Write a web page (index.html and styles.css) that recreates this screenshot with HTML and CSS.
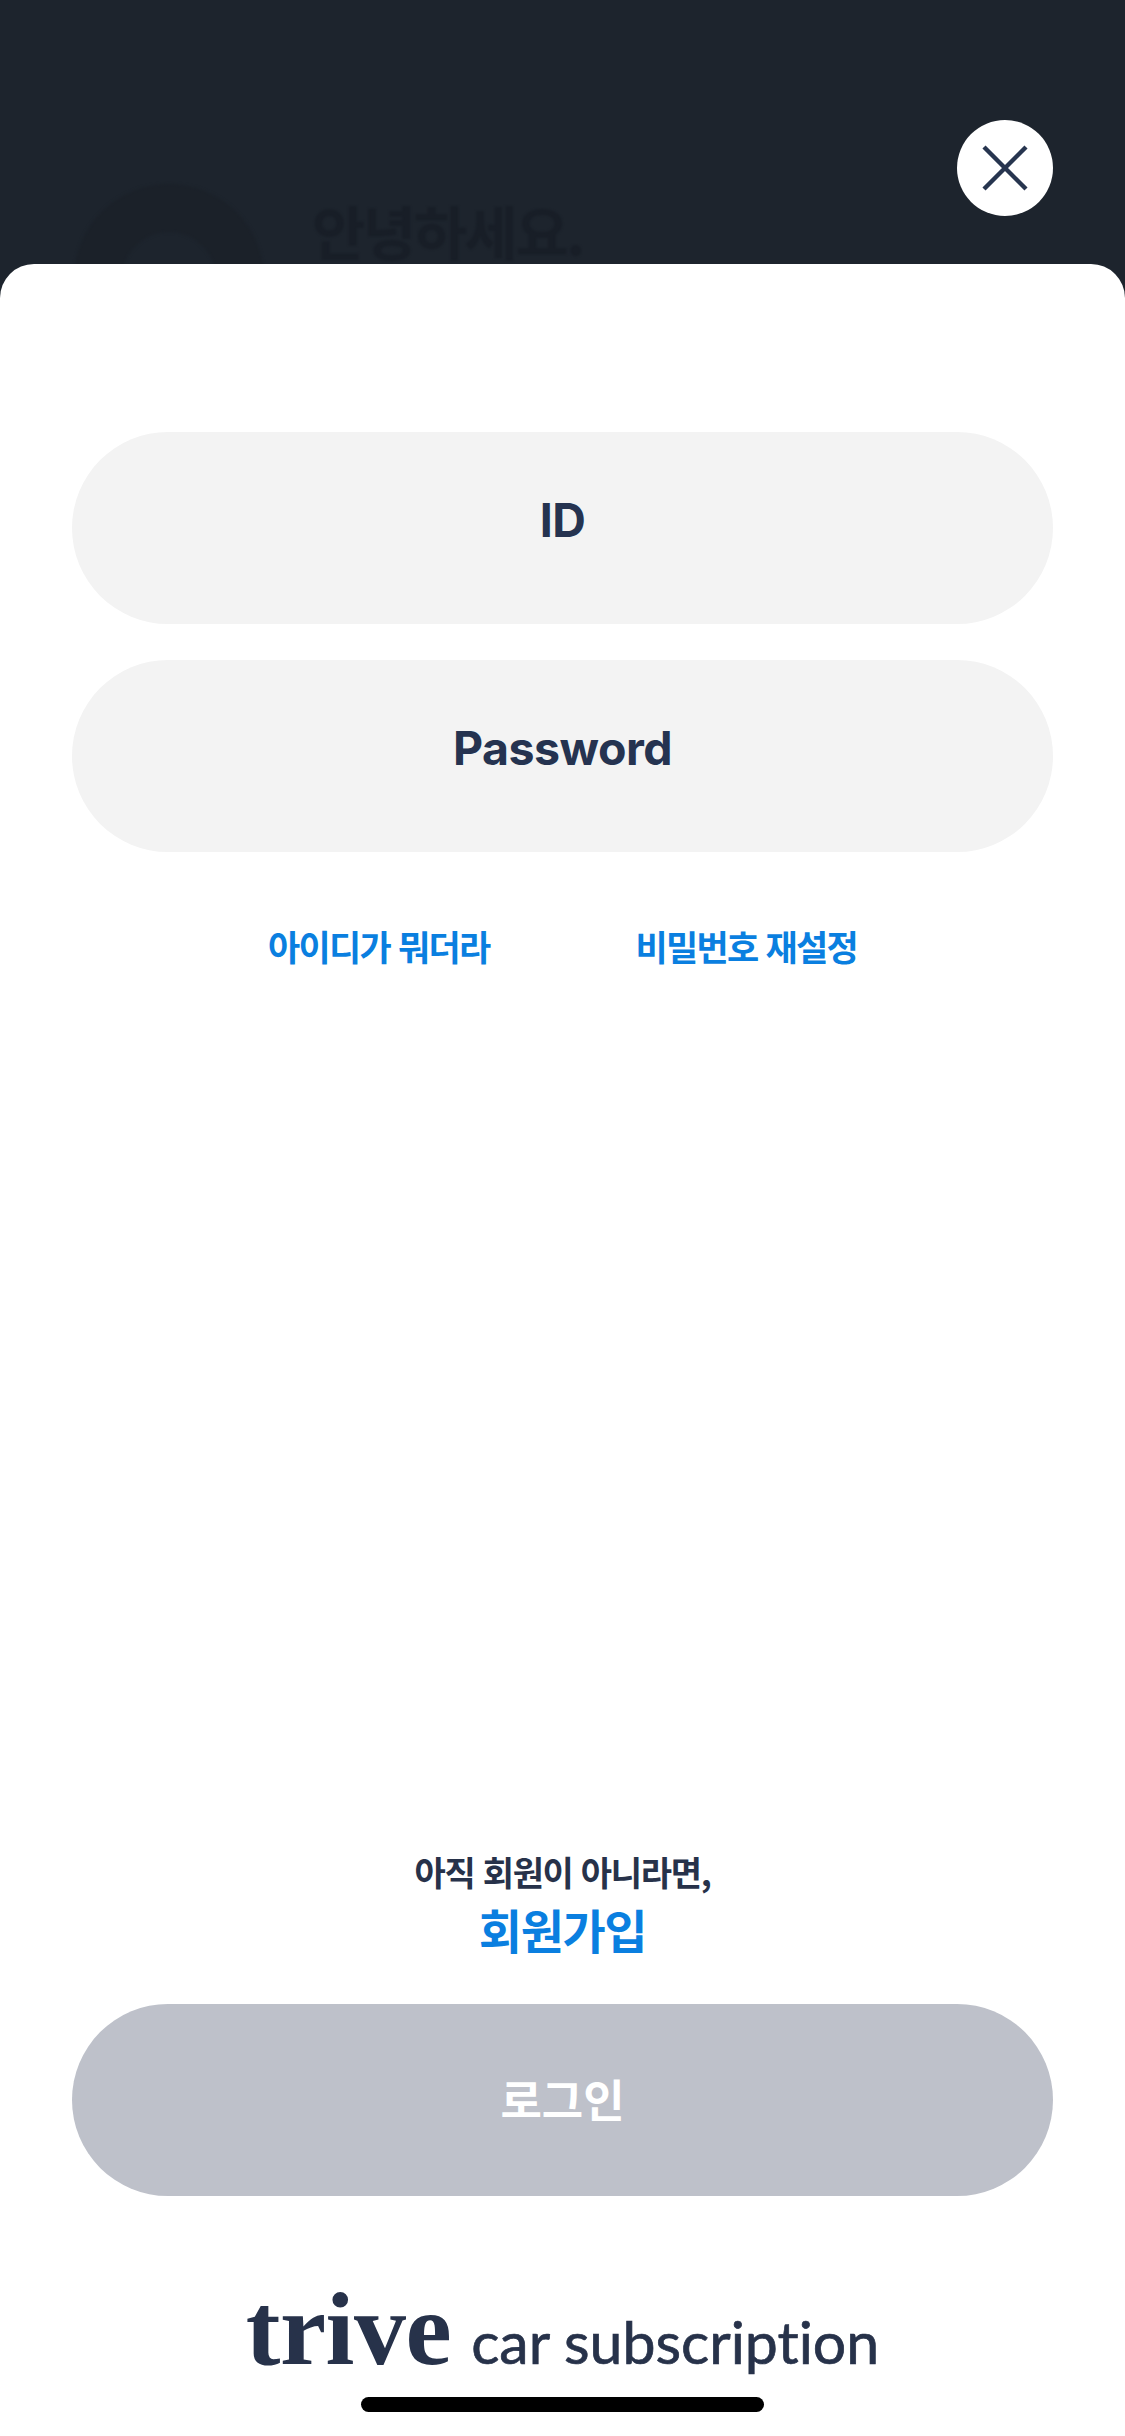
FILE: index.html
```html
<!DOCTYPE html>
<html lang="ko">
<head>
<meta charset="utf-8">
<title>trive 로그인</title>
<link rel="stylesheet" href="styles.css">
</head>
<body>
<div class="screen">
  <div class="backdrop">
    <div class="avatar"></div>
    <div class="hello">안녕하세요.</div>
    <button class="close" aria-label="닫기">
      <svg width="48" height="48" viewBox="0 0 48 48"><path d="M3 3 45 45M45 3 3 45" fill="none" stroke="#27354f" stroke-width="4.4"/></svg>
    </button>
  </div>
  <main class="sheet">
    <div class="fields">
      <div class="field">ID</div>
      <div class="field">Password</div>
    </div>
    <div class="links">
      <a class="link">아이디가 뭐더라</a>
      <a class="link">비밀번호 재설정</a>
    </div>
    <div class="spacer"></div>
    <p class="notice">아직 회원이 아니라면,</p>
    <a class="signup">회원가입</a>
    <button class="login"><span class="login-label">로그인</span></button>
    <div class="brand"><span class="brand-name">trive</span><span class="brand-tag">car subscription</span></div>
    <div class="home-bar"></div>
  </main>
</div>
</body>
</html>
```
FILE: styles.css
```css
* { box-sizing: border-box; }
html, body { margin: 0; padding: 0; }
body { width: 1125px; height: 2436px; overflow: hidden; background: #1d242d; font-family: "Noto Sans CJK KR", sans-serif; }
.screen { height: 2436px; display: flex; flex-direction: column; }
.backdrop { position: relative; height: 264px; flex: none; overflow: hidden; }
.avatar { position: absolute; left: 74px; top: 184px; width: 190px; height: 190px; border-radius: 50%; border: 48px solid #1b2129; filter: blur(1.5px); }
.hello { position: absolute; left: 312px; top: 190px; font-size: 58px; line-height: 80px; font-weight: 700; letter-spacing: -2.5px; color: #181e27; filter: blur(.8px); }
.close { position: absolute; left: 957px; top: 120px; width: 96px; height: 96px; border: 0; padding: 0; border-radius: 50%; background: #fff; display: flex; align-items: center; justify-content: center; }
.sheet { flex: 1; background: #fff; border-radius: 34px 34px 0 0; padding: 168px 72px 24px; display: flex; flex-direction: column; align-items: center; }
.fields { width: 100%; display: flex; flex-direction: column; gap: 36px; }
.field { height: 192px; border-radius: 96px; background: #f3f3f3; display: flex; align-items: flex-start; justify-content: center; padding-top: 60px; font-family: Inter, sans-serif; font-weight: 700; font-size: 46.5px; line-height: 56px; letter-spacing: -.5px; color: #253350; }
.links { display: flex; justify-content: center; gap: 146px; margin-top: 66px; }
.link { font-size: 35px; line-height: 56px; font-weight: 700; letter-spacing: -1.7px; color: #0a7fe0; }
.spacer { flex: 1; }
.notice { margin: 0; font-size: 34px; line-height: 50px; font-weight: 700; letter-spacing: -1.3px; color: #27324a; }
.signup { margin-top: -3px; font-size: 47px; line-height: 70px; font-weight: 700; letter-spacing: -1.4px; color: #0a7fe0; }
.login { width: 100%; height: 192px; margin-top: 40px; border: 0; border-radius: 96px; background: #bec1ca; color: #fff; font-family: inherit; font-size: 45px; font-weight: 700; padding: 0 0 4px; }
.login-label { display: block; }
.brand { margin-top: 85px; display: flex; align-items: baseline; gap: 20px; color: #27324a; height: 96px; }
.brand-name { font-family: "Liberation Serif", serif; font-weight: 700; font-size: 104px; line-height: 96px; letter-spacing: -.5px; }
.brand-tag { font-family: Lato, sans-serif; font-size: 59px; line-height: 96px; font-variant-ligatures: none; -webkit-text-stroke: .7px #27324a; }
.home-bar { width: 403px; height: 15px; margin-top: 20px; border-radius: 8px; background: #000; }
```
